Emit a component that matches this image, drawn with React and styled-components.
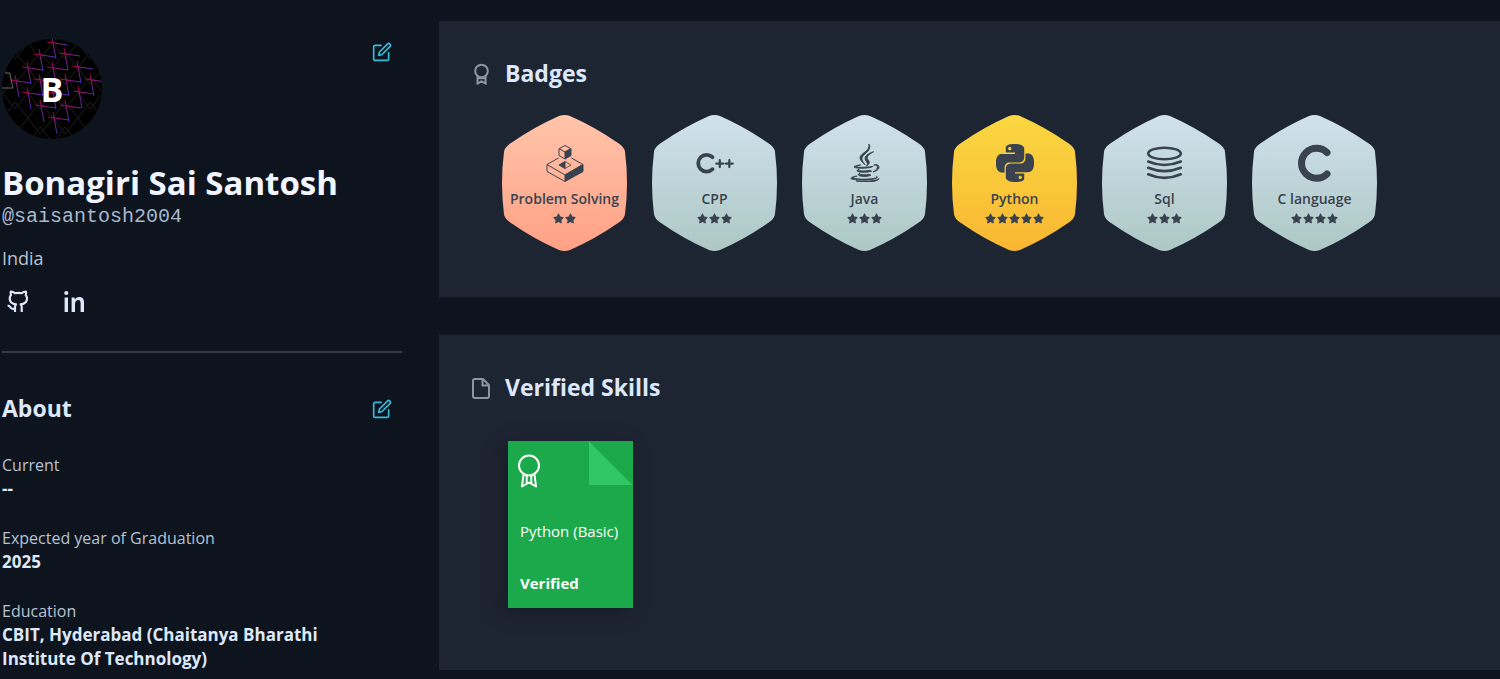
import React from "react";
import styled, { createGlobalStyle } from "styled-components";
import { FaJava, FaStar } from "react-icons/fa";
import { FiEdit } from "react-icons/fi";
import { SiPython } from "react-icons/si";

const GlobalStyle = createGlobalStyle`
  *, *::before, *::after { box-sizing: border-box; }
  body {
    margin: 0;
    background: #0e141e;
    color: #dde8fb;
    font-family: "Open Sans", "Noto Sans", sans-serif;
  }
  h1, h2, p, dl, dd, ul { margin: 0; padding: 0; }
`;

const Page = styled.div`
  display: flex;
  align-items: flex-start;
  gap: 37px;
`;

const Sidebar = styled.aside`
  flex: 0 0 402px;
  padding: 39px 0 8px 2px;
`;

const Row = styled.div`
  display: flex;
  justify-content: space-between;
  align-items: ${(p) => p.$align || "center"};
  padding-right: 10px;
`;

const Avatar = styled.div`
  display: grid;
  width: 100px;
  height: 100px;
  border-radius: 50%;
  overflow: hidden;
  background: #000;

  > * { grid-area: 1 / 1; }
`;

const Initial = styled.span`
  place-self: center;
  z-index: 1;
  color: #fff;
  font: 700 34px/48px "Open Sans", sans-serif;
`;

const EditButton = styled.button`
  display: flex;
  padding: 3px 0 2px;
  border: 0;
  background: none;
  color: #39b9dc;
  cursor: pointer;
`;

const Name = styled.h1`
  margin-top: 24px;
  color: #f0f5ff;
  font-size: 33px;
  line-height: 40px;
`;

const Username = styled.p`
  color: #a9b8cc;
  font: 20px/28px "Liberation Mono", monospace;
`;

const Country = styled.p`
  margin-top: 15px;
  color: #b7c2d3;
  font-size: 18px;
  line-height: 24px;
`;

const Socials = styled.div`
  display: flex;
  gap: 24px;
  margin-top: 16px;
`;

const SocialLink = styled.a`
  display: flex;
  color: #dde8fb;
`;

const Divider = styled.hr`
  height: 2px;
  margin: 33px 0 39px;
  border: 0;
  background: #343b46;
`;

const Heading = styled.h2`
  color: #dde8fb;
  font-size: 23px;
  line-height: 32px;
`;

const Facts = styled.dl`
  display: grid;
  gap: 25px;
  margin-top: 29px;
`;

const FactLabel = styled.dt`
  color: #b7c2d3;
  font-size: 16px;
  line-height: 24px;
`;

const FactValue = styled.dd`
  max-width: 340px;
  font-size: 17px;
  font-weight: 700;
  line-height: 24px;
`;

const Main = styled.main`
  display: flex;
  flex: 1;
  flex-direction: column;
  gap: 38px;
  min-width: 0;
  padding: 21px 0 9px;
`;

const Panel = styled.section`
  padding: 36px 30px ${(p) => p.$bottom};
  background: #1e2532;
`;

const PanelTitle = styled.div`
  display: flex;
  align-items: center;
  gap: 12px;
  color: #8b95a6;
`;

const BadgeList = styled.ul`
  display: flex;
  flex-wrap: wrap;
  gap: 25px;
  margin-top: 26px;
  padding-left: 33px;
  list-style: none;
`;

const Badge = styled.li`
  display: grid;
  width: 125px;
  height: 136px;
  color: #39424e;

  > * { grid-area: 1 / 1; }
`;

const BadgeBody = styled.div`
  display: flex;
  flex-direction: column;
  align-items: center;
  z-index: 1;
  padding-top: 29px;
`;

const BadgeName = styled.span`
  margin-top: 7px;
  font-size: 14px;
  font-weight: 600;
  line-height: 20px;
  white-space: nowrap;
`;

const Stars = styled.span`
  display: flex;
  gap: 1px;
  margin-top: 4px;
`;

const Certificate = styled.a`
  display: flex;
  flex-direction: column;
  width: 125px;
  height: 167px;
  margin: 38px 0 0 39px;
  padding: 13px 12px;
  background: linear-gradient(45deg, #32c766 50%, transparent 50%) top right / 44px 44px no-repeat #1ba94c;
  box-shadow: -4px 4px 16px rgba(14, 16, 30, 0.5);
  color: #fff;
  font-size: 15px;
  line-height: 24px;
  text-decoration: none;
  white-space: nowrap;

  svg { margin-left: -3px; }
`;

const SkillName = styled.span`
  margin-top: auto;
  margin-bottom: 28px;
`;

const CROSSES = [
  [51, 4], [38, 16], [63, 15], [26, 29], [51, 29], [76, 28], [14, 42], [38, 41],
  [64, 41], [89, 41], [26, 54], [51, 54], [77, 53], [39, 67], [64, 67], [52, 79],
];

function AvatarArt() {
  return (
    <svg width="100" height="100" viewBox="0 0 100 100" aria-hidden="true">
      <defs>
        <linearGradient id="across" gradientUnits="userSpaceOnUse" x1="-6" y1="0" x2="15" y2="2">
          <stop offset="0" stopColor="#b0003a" />
          <stop offset="0.4" stopColor="#b5127c" />
          <stop offset="1" stopColor="#4838c8" />
        </linearGradient>
        <linearGradient id="down" gradientUnits="userSpaceOnUse" x1="-1" y1="-6" x2="3" y2="16">
          <stop offset="0" stopColor="#b0003a" />
          <stop offset="0.4" stopColor="#9a1c8c" />
          <stop offset="1" stopColor="#4838c8" />
        </linearGradient>
        <pattern id="mesh" width="25" height="25" patternUnits="userSpaceOnUse" x="1" y="4">
          <path d="M0 0 12 16 25 0M0 25 12 9 25 25" fill="none" stroke="#1c1c1c" />
        </pattern>
      </defs>
      <rect width="100" height="100" fill="url(#mesh)" />
      {CROSSES.map(([x, y]) => (
        <g key={`${x}-${y}`} transform={`translate(${x} ${y})`} fill="none" strokeWidth="0.9">
          <path d="M-6-1 15 2" stroke="url(#across)" />
          <path d="M-1-6 3 16" stroke="url(#down)" />
        </g>
      ))}
      <path d="M3 34H8L9 40 11 49H0" fill="none" stroke="#666" />
    </svg>
  );
}

function GithubIcon() {
  return (
    <svg width="32" height="32" viewBox="0 0 32 32" fill="none" stroke="currentColor" strokeWidth="2.200" strokeLinejoin="round" aria-hidden="true">
      <path d="M13 26V21.500C13 20 13.200 19 14 18.300 10 18 7.700 15.500 7.700 12.500 7.700 11 8.200 9.900 9 9 8.400 7.800 8.400 6.800 8.800 5.700 10.500 5.700 11.900 6.300 13 7.200 15 6.700 17.700 6.700 19.700 7.200 20.800 6.300 22.200 5.700 23.900 5.700 24.300 6.800 24.300 7.800 23.700 9 24.500 9.900 25 11 25 12.500 25 15.500 22.700 18 18.700 18.300 19.500 19 19.700 20 19.700 21.500V26" />
      <path d="M13 22.800C10.500 23.300 9.300 22.700 8.600 21.500 8 20.300 7.300 19.600 5.600 19.500" />
    </svg>
  );
}

function LinkedinIcon() {
  return (
    <svg width="32" height="32" viewBox="0 0 32 32" fill="currentColor" aria-hidden="true">
      <circle cx="8.300" cy="7" r="2.100" />
      <path d="M6.600 11.400H10V26H6.600ZM13.600 11.400H16.500L17 13.400C18 11.800 19.300 11.100 21.200 11.100 24.600 11.100 26 13.200 26 16.500V26H22.600V17.200C22.600 15 21.900 14 20.300 14 18 14 17 15.700 17 18.500V26H13.600Z" />
    </svg>
  );
}

function RibbonIcon() {
  return (
    <svg width="24" height="34" viewBox="0 0 24 34" fill="none" stroke="currentColor" strokeWidth="2" strokeLinejoin="round" aria-hidden="true">
      <circle cx="12" cy="11.500" r="10" />
      <path d="M6.500 20.500 5 32.500 12 28.500 19 32.500 17.500 20.500M9.700 21.500 9.700 29M14.300 21.500 14.300 29" />
    </svg>
  );
}

function AwardIcon() {
  return (
    <svg width="24" height="24" viewBox="0 0 24 24" fill="none" stroke="currentColor" strokeWidth="2" aria-hidden="true">
      <circle cx="12.500" cy="10" r="6.300" />
      <path d="M8.500 14.500V22.500L12.500 20.300 16.600 22.500V14.500M9 17.300H16" />
    </svg>
  );
}

function FileIcon() {
  return (
    <svg width="24" height="24" viewBox="0 0 24 24" fill="none" stroke="currentColor" strokeWidth="2" strokeLinejoin="round" aria-hidden="true">
      <path d="M14 4H6A2 2 0 0 0 4 6V21A2 2 0 0 0 6 23H18A2 2 0 0 0 20 21V10ZM13.500 4.500V10.500H19.500" />
    </svg>
  );
}

function Hexagon({ id, from, to }) {
  return (
    <svg width="125" height="136" viewBox="0 0 125 136" aria-hidden="true">
      <defs>
        <linearGradient id={id} x1="0" y1="0" x2="0" y2="1">
          <stop offset="0" stopColor={from} />
          <stop offset="1" stopColor={to} />
        </linearGradient>
      </defs>
      <path
        fill={`url(#${id})`}
        d="M57 1Q62.500-1 68 1 93 12 116 28 122.500 32 123 37 127 68 123 99 122.500 104 116 108 93 124 68 135 62.500 137 57 135 32 124 9 108 2.500 104 2 99-2 68 2 37 2.500 32 9 28 32 12 57 1Z"
      />
    </svg>
  );
}

function BlocksIcon() {
  return (
    <svg width="38" height="38" viewBox="0 0 38 38" fill="none" stroke="currentColor" strokeLinejoin="round" aria-hidden="true">
      <path d="M12.500 14 1 20.500 19 31 37 20.500 25.500 14M1 20.500V27.500L19 37.500" />
      <path d="M19 31 37 20.500V27.500L19 37.500Z" fill="currentColor" />
      <path d="M19 1.500 25 4.700 19 8 13 4.700ZM13 4.700V11.500L19 15" />
      <path d="M19 8 25 4.700V11.500L19 15Z" fill="currentColor" />
      <path d="M19 17.500 25 21 19 24.500" strokeWidth="0.800" />
      <path d="M19 17.500V24.500L13 21Z" fill="currentColor" />
    </svg>
  );
}

function CppIcon() {
  return (
    <svg width="38" height="38" viewBox="0 0 38 38" fill="none" stroke="currentColor" strokeLinecap="round" aria-hidden="true">
      <path d="M16.500 13.200A8.400 8.400 0 1 0 16.500 25.200" strokeWidth="3.800" />
      <path d="M20.300 19.600H27.300M23.800 16.100V23.100M29.800 19.600H36.800M33.300 16.100V23.100" strokeWidth="2.200" />
    </svg>
  );
}

function SqlIcon() {
  return (
    <svg width="38" height="38" viewBox="0 0 38 38" fill="none" stroke="currentColor" strokeWidth="2.600" strokeLinecap="round" aria-hidden="true">
      <ellipse cx="18.500" cy="9.500" rx="16.300" ry="5.800" />
      <path d="M2.200 17.500Q18.500 24.500 34.800 17.500M2.200 23.800Q18.500 30.500 34.800 23.800M2.200 30.300Q18.500 37.500 34.800 30.300" />
    </svg>
  );
}

function CIcon() {
  return (
    <svg width="38" height="38" viewBox="0 0 38 38" fill="none" stroke="currentColor" strokeWidth="7" strokeLinecap="round" aria-hidden="true">
      <path d="M31 8.500A15 15 0 1 0 31 30" />
    </svg>
  );
}

const SILVER = ["#d0e1ec", "#adc8c5"];

const BADGES = [
  { name: "Problem Solving", stars: 2, colors: ["#ffc4aa", "#ffa186"], icon: <BlocksIcon /> },
  { name: "CPP", stars: 3, colors: SILVER, icon: <CppIcon /> },
  { name: "Java", stars: 3, colors: SILVER, icon: <FaJava size={38} stroke="currentColor" strokeWidth={12} /> },
  { name: "Python", stars: 5, colors: ["#fad741", "#f9b733"], icon: <SiPython size={38} /> },
  { name: "Sql", stars: 3, colors: SILVER, icon: <SqlIcon /> },
  { name: "C language", stars: 4, colors: SILVER, icon: <CIcon /> },
];

const FACTS = [
  ["Current", "--"],
  ["Expected year of Graduation", "2025"],
  ["Education", "CBIT, Hyderabad (Chaitanya Bharathi Institute Of Technology)"],
];

export default function App() {
  return (
    <>
      <GlobalStyle />
      <Page>
        <Sidebar>
          <Row $align="flex-start">
            <Avatar>
              <AvatarArt />
              <Initial>B</Initial>
            </Avatar>
            <EditButton aria-label="Edit profile">
              <FiEdit size={20} />
            </EditButton>
          </Row>
          <Name>Bonagiri Sai Santosh</Name>
          <Username>@saisantosh2004</Username>
          <Country>India</Country>
          <Socials>
            <SocialLink href="#github" aria-label="GitHub"><GithubIcon /></SocialLink>
            <SocialLink href="#linkedin" aria-label="LinkedIn"><LinkedinIcon /></SocialLink>
          </Socials>
          <Divider />
          <Row>
            <Heading>About</Heading>
            <EditButton aria-label="Edit about">
              <FiEdit size={20} />
            </EditButton>
          </Row>
          <Facts>
            {FACTS.map(([label, value]) => (
              <div key={label}>
                <FactLabel>{label}</FactLabel>
                <FactValue>{value}</FactValue>
              </div>
            ))}
          </Facts>
        </Sidebar>
        <Main>
          <Panel $bottom="46px">
            <PanelTitle>
              <AwardIcon />
              <Heading>Badges</Heading>
            </PanelTitle>
            <BadgeList>
              {BADGES.map((b, i) => (
                <Badge key={b.name}>
                  <Hexagon id={`hex-${i}`} from={b.colors[0]} to={b.colors[1]} />
                  <BadgeBody>
                    {b.icon}
                    <BadgeName>{b.name}</BadgeName>
                    <Stars role="img" aria-label={`${b.stars} stars`}>
                      {Array.from({ length: b.stars }, (_, n) => (
                        <FaStar key={n} size={11} />
                      ))}
                    </Stars>
                  </BadgeBody>
                </Badge>
              ))}
            </BadgeList>
          </Panel>
          <Panel $bottom="62px">
            <PanelTitle>
              <FileIcon />
              <Heading>Verified Skills</Heading>
            </PanelTitle>
            <Certificate href="#certificate">
              <RibbonIcon />
              <SkillName>Python (Basic)</SkillName>
              <strong>Verified</strong>
            </Certificate>
          </Panel>
        </Main>
      </Page>
    </>
  );
}
